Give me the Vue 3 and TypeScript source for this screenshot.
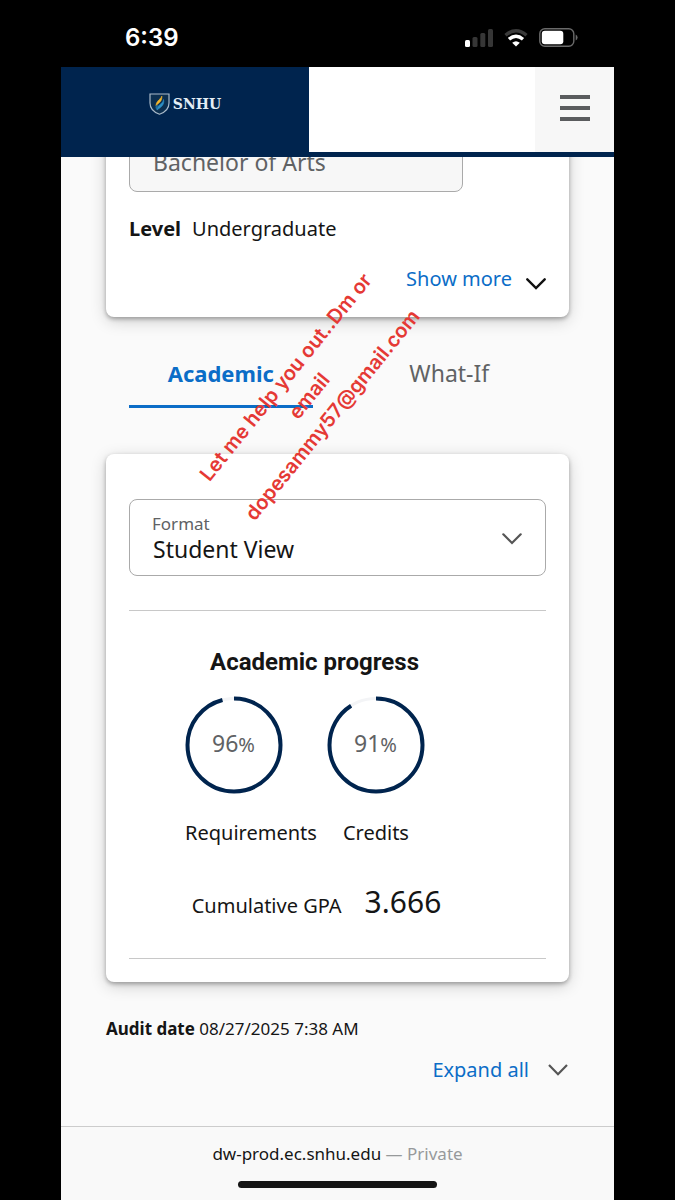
<script setup lang="ts">
import { ref } from 'vue'

interface Meter {
  label: string
  value: number
}

const degree = ref('Bachelor of Arts')
const format = ref('Student View')
const activeTab = ref('Academic')
const tabs: string[] = ['Academic', 'What-If']
const meters: Meter[] = [
  { label: 'Requirements', value: 96 },
  { label: 'Credits', value: 91 },
]
</script>

<template>
  <div class="device">
    <div class="status">
      <span class="time">6:39</span>
      <div class="indicators">
        <svg width="28" height="18" viewBox="0 0 28 18" aria-hidden="true">
          <rect x="0" y="11" width="5" height="7" rx="1.5" fill="#fff" />
          <rect x="7.5" y="8" width="5" height="10" rx="1.5" fill="#363636" />
          <rect x="15.3" y="4" width="5" height="14" rx="1.5" fill="#363636" />
          <rect x="23" y="0" width="5" height="18" rx="1.5" fill="#363636" />
        </svg>
        <svg width="24" height="18" viewBox="0 0 24 18" fill="none" aria-hidden="true">
          <path d="M1.5 6.2Q12-2.6 22.5 6.2" stroke="#3a3a3a" stroke-width="3.4" />
          <path d="M5 10.2Q12 4.200 19 10.2" stroke="#fff" stroke-width="3.4" />
          <path d="M8.2 13.7Q12 10.6 15.8 13.7L12 17.6Z" fill="#fff" />
        </svg>
        <svg width="39" height="19" viewBox="0 0 39 19" aria-hidden="true">
          <rect x="0.8" y="0.8" width="34" height="17.4" rx="5" fill="none" stroke="#6a6a6a" stroke-width="1.4" />
          <rect x="2.8" y="2.8" width="21.5" height="13.4" rx="3" fill="#fff" />
          <path d="M36.7 6.500Q38.6 7.5 38.6 9.5T36.7 12.5Z" fill="#6a6a6a" />
        </svg>
      </div>
    </div>

    <header class="header">
      <a class="brand" href="#" aria-label="SNHU home">
        <svg width="21" height="22" viewBox="0 0 21 22" aria-hidden="true">
          <path d="M1 1H20V10C20 16 15.5 19.5 10.5 21.2C5.5 19.5 1 16 1 10Z" fill="#0c2f50" stroke="#a9bac9" stroke-width="1.2" />
          <path d="M12.8 3C12.5 6 7 7.5 7 12.8C9 10 13.5 9 12.8 3Z" fill="#f3b62c" stroke="#f3b62c" stroke-width="0.6" />
          <path d="M14.5 6.5C14.5 11 8 11.5 8 17C11 14.5 16 12.5 14.5 6.5Z" fill="#2c8fc4" stroke="#2c8fc4" stroke-width="0.6" />
          <path d="M7 12.5C6 14 6.5 16 8 17C8 14.5 8.5 13.5 10 12Z" fill="#1c6a9c" />
        </svg>
        <span class="brand-name">SNHU</span>
      </a>
      <button class="menu" type="button" aria-label="Menu">
        <svg width="30" height="26" viewBox="0 0 30 26" fill="#5a5c5e" aria-hidden="true">
          <rect width="30" height="4" y="0" />
          <rect width="30" height="4" y="11" />
          <rect width="30" height="4" y="22" />
        </svg>
      </button>
    </header>

    <main class="content">
      <section class="card student">
        <input v-model="degree" class="degree" type="text" aria-label="Degree" readonly />
        <p class="level"><strong>Level</strong><span>Undergraduate</span></p>
        <button class="link show-more" type="button">
          Show more
          <svg class="drop" width="20" height="12" viewBox="0 0 20 12" fill="none" aria-hidden="true">
            <path d="M1.3 1.3L10 10L18.7 1.3" stroke="#111" stroke-width="2.4" stroke-linecap="round" />
          </svg>
        </button>
      </section>

      <div class="tabs" role="tablist">
        <button
          v-for="tab in tabs"
          :key="tab"
          type="button"
          role="tab"
          class="tab"
          :class="{ active: tab === activeTab }"
          :aria-selected="tab === activeTab"
          @click="activeTab = tab"
        >
          {{ tab }}
        </button>
      </div>

      <section class="card audit">
        <div class="field">
          <label for="format">Format</label>
          <select id="format" v-model="format">
            <option>Student View</option>
          </select>
          <svg class="field-arrow" width="20" height="12" viewBox="0 0 20 12" fill="none" aria-hidden="true">
            <path d="M1.3 1.3L10 10L18.7 1.3" stroke="#555" stroke-width="2.2" stroke-linecap="round" />
          </svg>
        </div>
        <hr />
        <div class="progress">
          <h2>Academic progress</h2>
          <div class="rings">
            <div v-for="meter in meters" :key="meter.label" class="ring">
              <svg width="98" height="98" viewBox="0 0 98 98" fill="none" aria-hidden="true">
                <circle cx="49" cy="49" r="46.5" stroke="#f3f4f6" stroke-width="3" />
                <circle
                  cx="49"
                  cy="49"
                  r="46.5"
                  stroke="#00244e"
                  stroke-width="4"
                  pathLength="100"
                  :stroke-dasharray="`${meter.value} 100`"
                  transform="rotate(-90 49 49)"
                />
              </svg>
              <span class="value">{{ meter.value }}<small>%</small></span>
            </div>
          </div>
          <div class="labels">
            <span v-for="meter in meters" :key="meter.label">{{ meter.label }}</span>
          </div>
          <p class="gpa">Cumulative GPA <b>3.666</b></p>
        </div>
        <hr />
      </section>

      <p class="audit-date"><strong>Audit date</strong> 08/27/2025 7:38 AM</p>
      <button class="link expand" type="button">
        Expand all
        <svg width="20" height="12" viewBox="0 0 20 12" fill="none" aria-hidden="true">
          <path d="M1 1L10 10.2L19 1" stroke="#555" stroke-width="2.2" />
        </svg>
      </button>
    </main>

    <footer class="browser-bar">
      <p>dw-prod.ec.snhu.edu <span>— Private</span></p>
      <div class="home-indicator"></div>
    </footer>

    <p class="overlay">Let me help you out..Dm or<br />email<br />dopesammy57@gmail.com</p>
  </div>
</template>

<style>
body {
  margin: 0;
  background: #000;
}
</style>

<style scoped>
* {
  box-sizing: border-box;
}

p,
h2 {
  margin: 0;
}

button,
input,
select {
  border: 0;
  padding: 0;
  font: inherit;
  color: inherit;
  background: none;
}

.device {
  position: relative;
  display: flex;
  flex-direction: column;
  min-height: 100vh;
  padding: 0 61px;
  background: #000;
  color: #151515;
  font-family: "Noto Sans", sans-serif;
  font-size: 20px;
  line-height: 28px;
}

.status {
  display: flex;
  align-items: center;
  justify-content: space-between;
  height: 67px;
  padding: 8px 36px 0 64px;
  color: #fff;
}

.time {
  font: 600 24px/28px Inter, sans-serif;
}

.indicators {
  display: flex;
  align-items: center;
  gap: 11px;
}

.header {
  position: relative;
  z-index: 1;
  display: flex;
  height: 90px;
  background: #fff;
  border-bottom: 5px solid #00244e;
}

.brand {
  display: flex;
  flex: 0 0 248px;
  align-items: center;
  justify-content: center;
  gap: 3px;
  padding-bottom: 12px;
  background: #00244e;
  color: #e3edf5;
  text-decoration: none;
}

.brand-name {
  font: 700 14px/22px "DejaVu Serif", serif;
}

.menu {
  display: grid;
  place-items: center;
  width: 79px;
  margin-left: auto;
  padding-bottom: 4px;
  background: #f7f7f7;
}

.content {
  flex: 1;
  padding: 0 45px;
  background: #fafafa;
}

.card {
  display: flex;
  flex-direction: column;
  padding: 0 23px;
  border-radius: 8px;
  background: #fff;
  box-shadow: 0 2px 4px rgba(0, 0, 0, 0.3), 0 4px 16px rgba(0, 0, 0, 0.18);
}

.student {
  height: 224px;
  margin-top: -64px;
  padding-top: 23px;
}

.degree {
  width: 80%;
  height: 76px;
  padding: 15px 23px 0;
  border: 1px solid #aaa;
  border-radius: 8px;
  background: #f7f7f7;
  color: #606264;
  font-size: 23px;
}

.level {
  display: flex;
  gap: 11px;
  margin-top: 23px;
}

.link {
  display: flex;
  align-items: center;
  align-self: flex-end;
  color: #0b6dc7;
}

.show-more {
  gap: 14px;
  margin-top: 22px;
}

.drop {
  margin-top: 10px;
}

.tabs {
  display: flex;
  gap: 45px;
  margin: 36px 28px 0 23px;
}

.tab {
  flex: 1;
  height: 55px;
  padding-bottom: 12px;
  border-bottom: 3px solid transparent;
  color: #606264;
  font-size: 23px;
}

.tab.active {
  border-color: #0b6dc7;
  color: #0b6dc7;
  font-size: 22px;
  font-weight: 700;
}

.audit {
  margin-top: 46px;
  padding: 45px 23px 23px;
}

.field {
  position: relative;
  display: flex;
  flex-direction: column;
  height: 77px;
  border: 1px solid #aaa;
  border-radius: 8px;
}

.field label {
  padding: 13px 22px 0;
  color: #606264;
  font-size: 17px;
  line-height: 22px;
}

.field select {
  width: 100%;
  height: 28px;
  padding: 0 23px;
  appearance: none;
  font-size: 23px;
  line-height: 28px;
}

.field-arrow {
  position: absolute;
  top: 33px;
  right: 23px;
  pointer-events: none;
}

hr {
  width: 100%;
  height: 1px;
  margin: 34px 0 0;
  border: 0;
  background: #c8c8c8;
}

.progress {
  display: flex;
  flex-direction: column;
  align-items: center;
  padding: 37px 46px 0 0;
}

h2 {
  font: 700 24px/28px Roboto, sans-serif;
}

.rings {
  display: flex;
  gap: 44px;
  margin: 20px 20px 0 0;
}

.ring {
  display: grid;
  place-items: center;
}

.ring > * {
  grid-area: 1 / 1;
}

.value {
  padding-bottom: 2px;
  color: #606264;
  font-size: 23px;
}

.value small {
  font-size: 20px;
}

.labels {
  display: flex;
  gap: 26px;
  margin: 25px 35px 0 0;
}

.gpa {
  display: flex;
  align-items: baseline;
  gap: 23px;
  margin: 35px 0 0 4px;
  line-height: 40px;
}

.gpa b {
  font-size: 30px;
  font-weight: 400;
}

.audit hr:last-child {
  margin-top: 32px;
}

.audit-date {
  margin-top: 33px;
  font-size: 17px;
}

.expand {
  gap: 19px;
  margin: 13px 1px 0 auto;
}

.browser-bar {
  display: flex;
  flex-direction: column;
  align-items: center;
  height: 74px;
  padding-top: 13px;
  border-top: 1px solid #ccc;
  background: #f9f9f9;
  font-size: 17px;
}

.browser-bar span {
  color: #97999b;
}

.home-indicator {
  width: 36%;
  height: 7px;
  margin-top: 13px;
  border-radius: 4px;
  background: #151515;
}

.overlay {
  position: absolute;
  z-index: 2;
  top: 351px;
  left: 309px;
  color: #e53935;
  font: 600 20px/30px Inter, sans-serif;
  text-align: center;
  white-space: nowrap;
  transform: translateX(-50%) rotate(-51deg);
}
</style>
